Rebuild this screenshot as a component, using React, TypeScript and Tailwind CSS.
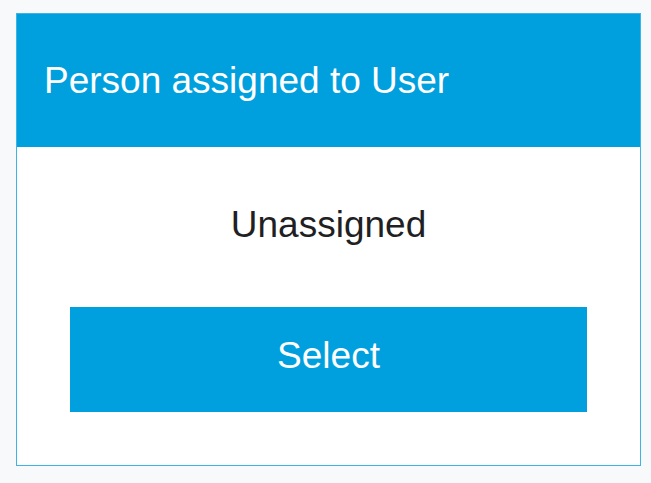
export default function App() {
  return (
    <div className="min-h-screen bg-[#f7f9fb] pl-4 pt-[13px] font-['Liberation_Sans',Arial,sans-serif]">
      <div className="w-[625px] h-[453px] border border-[#3fb3e6] bg-white flex flex-col">
        <div className="h-[133px] bg-[#00a0df] flex items-center pl-[27px]">
          <h2 className="text-[37px] text-white leading-none">Person assigned to User</h2>
        </div>
        <div className="flex-1 flex flex-col items-center px-[53px]">
          <p className="mt-[59px] text-[37px] leading-none text-[#1f1f24]">Unassigned</p>
          <button className="mt-[64px] w-full h-[105px] bg-[#00a0df] text-white text-[37px] leading-none pb-2">
            Select
          </button>
        </div>
      </div>
    </div>
  );
}
